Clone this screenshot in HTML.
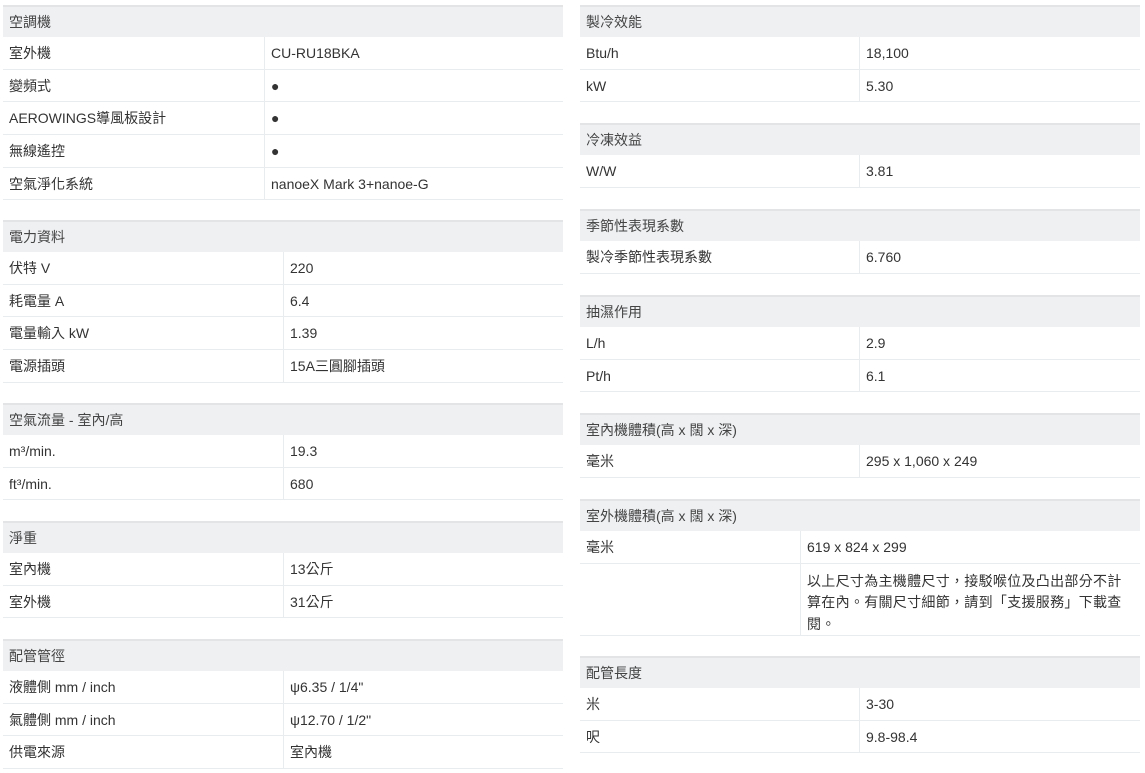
<!DOCTYPE html>
<html><head><meta charset="utf-8"><style>
*{margin:0;padding:0;box-sizing:border-box}
body{width:1145px;height:773px;background:#fff;font-family:"Liberation Sans","Noto Sans CJK TC",sans-serif;font-size:14px;color:#333;position:relative;overflow:hidden}
.t{position:absolute;width:560px}
.h{height:32px;background:#eef0f2;border-top:2px solid #e2e4e6;padding-left:6px;line-height:31px;color:#444}
.r{height:32.7px;border-bottom:1.5px solid #e8ecef;display:flex;line-height:33px}
.r div:first-child{padding-left:6px;border-right:1.5px solid #e8ecef;flex:none}
.r div:last-child{padding-left:6px}
.n{height:72px;line-height:21.5px}
.n div:last-child{padding-top:7px;padding-right:14px;letter-spacing:0.3px}
</style></head><body>
<div class="t" style="left:3px;top:5px"><div class="h">空調機</div>
<div class="r"><div style="width:262px">室外機</div><div>CU-RU18BKA</div></div>
<div class="r"><div style="width:262px">變頻式</div><div>●</div></div>
<div class="r"><div style="width:262px">AEROWINGS導風板設計</div><div>●</div></div>
<div class="r"><div style="width:262px">無線遙控</div><div>●</div></div>
<div class="r"><div style="width:262px">空氣淨化系統</div><div>nanoeX Mark 3+nanoe-G</div></div></div>

<div class="t" style="left:3px;top:220px"><div class="h">電力資料</div>
<div class="r"><div style="width:281px">伏特 V</div><div>220</div></div>
<div class="r"><div style="width:281px">耗電量 A</div><div>6.4</div></div>
<div class="r"><div style="width:281px">電量輸入 kW</div><div>1.39</div></div>
<div class="r"><div style="width:281px">電源插頭</div><div>15A三圓腳插頭</div></div></div>

<div class="t" style="left:3px;top:403px"><div class="h">空氣流量 - 室內/高</div>
<div class="r"><div style="width:281px">m³/min.</div><div>19.3</div></div>
<div class="r"><div style="width:281px">ft³/min.</div><div>680</div></div></div>

<div class="t" style="left:3px;top:521px"><div class="h">淨重</div>
<div class="r"><div style="width:281px">室內機</div><div>13公斤</div></div>
<div class="r"><div style="width:281px">室外機</div><div>31公斤</div></div></div>

<div class="t" style="left:3px;top:639px"><div class="h">配管管徑</div>
<div class="r"><div style="width:281px">液體側 mm / inch</div><div>ψ6.35 / 1/4"</div></div>
<div class="r"><div style="width:281px">氣體側 mm / inch</div><div>ψ12.70 / 1/2"</div></div>
<div class="r"><div style="width:281px">供電來源</div><div>室內機</div></div></div>

<div class="t" style="left:580px;top:5px"><div class="h">製冷效能</div>
<div class="r"><div style="width:280px">Btu/h</div><div>18,100</div></div>
<div class="r"><div style="width:280px">kW</div><div>5.30</div></div></div>

<div class="t" style="left:580px;top:123px"><div class="h">冷凍效益</div>
<div class="r"><div style="width:280px">W/W</div><div>3.81</div></div></div>

<div class="t" style="left:580px;top:209px"><div class="h">季節性表現系數</div>
<div class="r"><div style="width:280px">製冷季節性表現系數</div><div>6.760</div></div></div>

<div class="t" style="left:580px;top:295px"><div class="h">抽濕作用</div>
<div class="r"><div style="width:280px">L/h</div><div>2.9</div></div>
<div class="r"><div style="width:280px">Pt/h</div><div>6.1</div></div></div>

<div class="t" style="left:580px;top:413px"><div class="h">室內機體積(高 x 闊 x 深)</div>
<div class="r"><div style="width:280px">毫米</div><div>295 x 1,060 x 249</div></div></div>

<div class="t" style="left:580px;top:499px"><div class="h">室外機體積(高 x 闊 x 深)</div>
<div class="r"><div style="width:221px">毫米</div><div>619 x 824 x 299</div></div>
<div class="r n"><div style="width:221px"></div><div>以上尺寸為主機體尺寸，接駁喉位及凸出部分不計算在內。有關尺寸細節，請到「支援服務」下載查閱。</div></div></div>

<div class="t" style="left:580px;top:656px"><div class="h">配管長度</div>
<div class="r"><div style="width:280px">米</div><div>3-30</div></div>
<div class="r"><div style="width:280px">呎</div><div>9.8-98.4</div></div></div>
</body></html>
